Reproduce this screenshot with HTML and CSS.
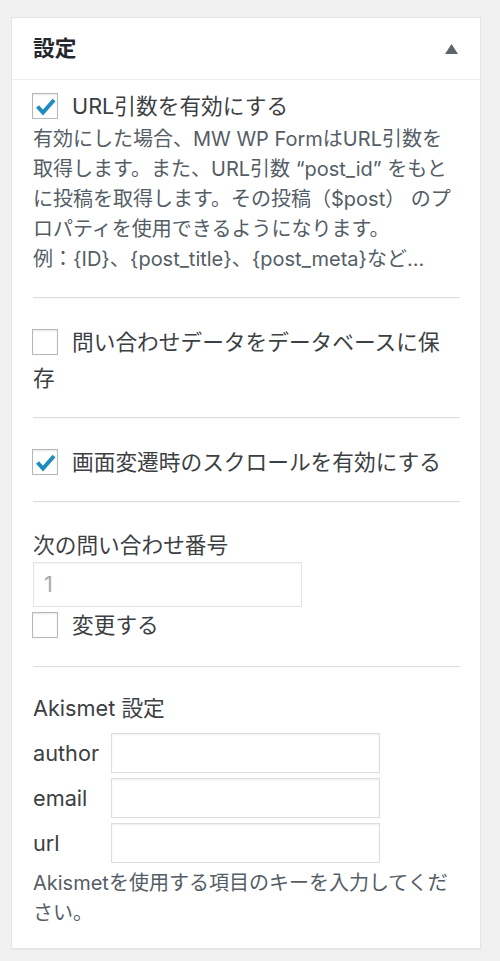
FILE: index.html
```html
<!DOCTYPE html>
<html lang="ja">
<head>
<meta charset="utf-8">
<title>設定</title>
<link rel="stylesheet" href="styles.css">
</head>
<body>
<div class="postbox">
  <div class="postbox-header">
    <h2 class="hndle">設定</h2>
    <span class="toggle" aria-hidden="true"><svg width="13" height="10" viewBox="0 0 13 10"><polygon points="6.5,0 13,10 0,10" fill="#5f6468"/></svg></span>
  </div>
  <div class="inside">
    <div class="section first">
      <label class="cb-label"><span class="cb"><svg width="24" height="24" viewBox="0 0 24 24"><path d="M4.5 12.5 L10 18.5 L21 6" fill="none" stroke="#1e8cbe" stroke-width="4"/></svg></span>URL引数を有効にする</label>
      <p class="desc">有効にした場合、MW WP FormはURL引数を取得します。また、URL引数 “post_id” をもとに投稿を取得します。その投稿（$post） のプロパティを使用できるようになります。<br>例：{ID}、{post_title}、{post_meta}など...</p>
    </div>
    <div class="sep"></div>
    <div class="section">
      <label class="cb-label"><span class="cb"></span>問い合わせデータをデータベースに保存</label>
    </div>
    <div class="sep"></div>
    <div class="section">
      <label class="cb-label"><span class="cb"><svg width="24" height="24" viewBox="0 0 24 24"><path d="M4.5 12.5 L10 18.5 L21 6" fill="none" stroke="#1e8cbe" stroke-width="4"/></svg></span>画面変遷時のスクロールを有効にする</label>
    </div>
    <div class="sep"></div>
    <div class="section counter">
      <div class="field-title">次の問い合わせ番号</div>
      <div class="num-input">1</div>
      <label class="cb-label"><span class="cb"></span>変更する</label>
    </div>
    <div class="sep"></div>
    <div class="section akismet">
      <div class="field-title">Akismet 設定</div>
      <div class="ak-grid">
        <span class="ak-label">author</span><span class="text-input"></span>
        <span class="ak-label">email</span><span class="text-input"></span>
        <span class="ak-label">url</span><span class="text-input"></span>
      </div>
      <p class="desc ak-desc">Akismetを使用する項目のキーを入力してください。</p>
    </div>
  </div>
</div>
</body>
</html>
```
FILE: styles.css
```css
html, body {
  margin: 0;
  padding: 0;
}
body {
  background: #f1f1f1;
  font-family: Inter, "Noto Sans CJK JP", sans-serif;
  color: #3c4043;
  padding-top: 17px;
  padding-bottom: 12px;
}
.postbox {
  margin-left: 11px;
  width: 470px;
  box-sizing: border-box;
  background: #fff;
  border: 1px solid #e5e5e5;
  box-shadow: 0 1px 1px rgba(0, 0, 0, 0.04);
}
.postbox-header {
  height: 61px;
  display: flex;
  align-items: center;
  justify-content: space-between;
  padding: 0 22px 0 21px;
  border-bottom: 1px solid #eee;
}
.hndle {
  margin: 0;
  font-size: 21.7px;
  font-weight: 700;
  color: #23282d;
  line-height: 1;
}
.toggle {
  display: flex;
  width: 13px;
  height: 10px;
}
.inside {
  padding: 0 20px 20px 21px;
}
.section {
  padding: 25px 0 21px;
}
.section.first {
  padding: 8px 0 23px;
}
.section.counter {
  padding-bottom: 23px;
}
.section.akismet {
  padding: 23px 0 0;
}
.sep {
  border-top: 1px solid #ddd;
  border-bottom: 1px solid #fafafa;
}
.cb-label {
  display: block;
  font-size: 21.7px;
  line-height: 36px;
  color: #3c4043;
}
.cb {
  display: inline-block;
  width: 26px;
  height: 26px;
  box-sizing: border-box;
  border: 1px solid #b4b9be;
  background: #fff;
  box-shadow: inset 0 1px 2px rgba(0, 0, 0, 0.1);
  vertical-align: -5px;
  margin: 0 14px 0 -1px;
  position: relative;
}
.cb svg {
  display: block;
  margin: 0;
}
.desc {
  margin: 0;
  font-size: 20px;
  line-height: 30px;
  color: #555d66;
}
.field-title {
  font-size: 21.7px;
  line-height: 34px;
  color: #3c4043;
}
.num-input {
  width: 269px;
  height: 45px;
  box-sizing: border-box;
  border: 1px solid #e4e4e4;
  background: rgba(255, 255, 255, 0.5);
  box-shadow: inset 0 1px 2px rgba(0, 0, 0, 0.04);
  padding-left: 10px;
  font-size: 21.7px;
  line-height: 43px;
  color: #a7aaad;
}
.ak-grid {
  display: grid;
  grid-template-columns: 78px 269px;
  row-gap: 5px;
  align-items: center;
  margin-top: 8px;
}
.ak-label {
  font-size: 21.7px;
  line-height: 40px;
  color: #3c4043;
}
.text-input {
  display: block;
  height: 40px;
  box-sizing: border-box;
  border: 1px solid #ddd;
  background: #fff;
  box-shadow: inset 0 1px 2px rgba(0, 0, 0, 0.07);
}
.ak-desc {
  margin-top: 5px;
}
```
